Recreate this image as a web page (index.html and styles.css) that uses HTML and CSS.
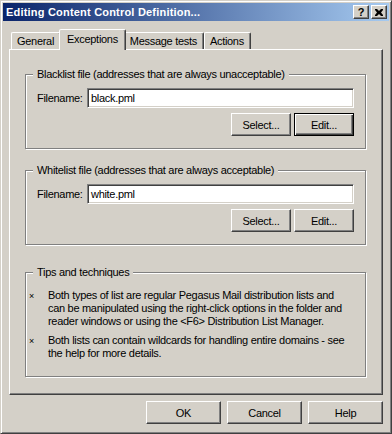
FILE: index.html
```html
<!DOCTYPE html>
<html lang="en">
<head>
    <meta charset="UTF-8">
    <title>Editing Content Control Definition...</title>
    <link rel="stylesheet" href="styles.css">
</head>
<body>
    <div class="window">
        <div class="titlebar">
            <span class="title">Editing Content Control Definition...</span>
            <div class="caption-buttons">
                <span class="cap-btn help">?</span>
                <span class="cap-btn">
                    <svg width="8" height="7" viewBox="0 0 8 7"><path d="M0 0h2l2 2 2-2h2v1l-2 2.5 2 2.5v1h-2l-2-2-2 2h-2v-1l2-2.5-2-2.5z" fill="#000"/></svg>
                </span>
            </div>
        </div>

        <div class="dialog-body">
            <div class="tabs">
                <div class="tab">General</div>
                <div class="tab active">Exceptions</div>
                <div class="tab">Message tests</div>
                <div class="tab">Actions</div>
            </div>

            <div class="panel">
                <fieldset class="group">
                    <legend>Blacklist file (addresses that are always unacceptable)</legend>
                    <div class="field-row">
                        <label>Filename:</label>
                        <div class="textbox">black.pml</div>
                    </div>
                    <div class="button-row">
                        <button class="btn">Select...</button>
                        <button class="btn default">Edit...</button>
                    </div>
                </fieldset>

                <fieldset class="group">
                    <legend>Whitelist file (addresses that are always acceptable)</legend>
                    <div class="field-row">
                        <label>Filename:</label>
                        <div class="textbox">white.pml</div>
                    </div>
                    <div class="button-row">
                        <button class="btn">Select...</button>
                        <button class="btn">Edit...</button>
                    </div>
                </fieldset>

                <fieldset class="group tips">
                    <legend>Tips and techniques</legend>
                    <ul class="tip-list">
                        <li>Both types of list are regular Pegasus Mail distribution lists and<br>can be manipulated using the right-click options in the folder and<br>reader windows or using the &lt;F6&gt; Distribution List Manager.</li>
                        <li>Both lists can contain wildcards for handling entire domains - see<br>the help for more details.</li>
                    </ul>
                </fieldset>
            </div>

            <div class="dialog-buttons">
                <button class="btn wide">OK</button>
                <button class="btn wide">Cancel</button>
                <button class="btn wide">Help</button>
            </div>
        </div>
    </div>
</body>
</html>
```

FILE: styles.css
```css
* {
    margin: 0;
    padding: 0;
    box-sizing: border-box;
}

body {
    font-family: 'Liberation Sans', Arial, sans-serif;
    font-size: 11px;
    letter-spacing: -0.3px;
    color: #000;
    background: #d4d0c8;
}

.window {
    width: 392px;
    height: 434px;
    padding: 2px;
    background: #d4d0c8;
    border: 1px solid;
    border-color: #d4d0c8 #404040 #404040 #d4d0c8;
    box-shadow: inset 1px 1px #fff, inset -1px -1px #808080;
}

/* caption */
.titlebar {
    height: 18px;
    display: flex;
    align-items: center;
    justify-content: space-between;
    padding-left: 3px;
    background: linear-gradient(to right, #0a246a, #a6caf0);
}

.title {
    color: #fff;
    font-weight: bold;
    letter-spacing: 0.2px;
}

.caption-buttons {
    display: flex;
    gap: 2px;
    margin-right: 2px;
}

.cap-btn {
    width: 16px;
    height: 14px;
    display: flex;
    justify-content: center;
    align-items: center;
    background: #d4d0c8;
    border: 1px solid;
    border-color: #fff #404040 #404040 #fff;
    box-shadow: inset -1px -1px #808080;
}

.cap-btn.help {
    font-weight: bold;
    font-size: 11px;
    letter-spacing: 0;
}

/* body */
.dialog-body {
    padding: 0 6px;
}

.tabs {
    display: flex;
    align-items: flex-end;
    margin-top: 8px;
    padding-left: 2px;
}

.tab {
    height: 17px;
    display: flex;
    align-items: center;
    padding: 0 6px 1px 5px;
    border: 1px solid;
    border-bottom: none;
    border-color: #fff #404040 transparent #fff;
    border-radius: 2px 2px 0 0;
    box-shadow: inset -1px 0 #808080;
}

.tab.active {
    height: 21px;
    padding: 0 7px 3px;
    margin: 0 -2px -1px;
    position: relative;
    z-index: 1;
    background: #d4d0c8;
}

.panel {
    height: 346px;
    padding: 18px 16px 0 15px;
    border: 1px solid;
    border-color: #fff #404040 #404040 #fff;
    box-shadow: inset -1px -1px #808080;
}

.group {
    min-width: 0;
    padding: 7px 11px 12px;
    border: 1px solid #808080;
    box-shadow: 1px 1px #fff, inset 1px 1px #fff;
    margin-bottom: 15px;
}

.group legend {
    line-height: 13px;
    padding: 0 4px;
    margin-left: -4px;
    background: #d4d0c8;
}

.field-row {
    display: flex;
    align-items: center;
}

.field-row label {
    width: 50px;
}

.textbox {
    flex: 1;
    height: 20px;
    padding: 0 3px;
    display: flex;
    align-items: center;
    background: #fff;
    border: 1px solid;
    border-color: #808080 #fff #fff #808080;
    box-shadow: inset 1px 1px #404040, inset -1px -1px #d4d0c8;
}

.button-row {
    display: flex;
    justify-content: flex-end;
    gap: 3px;
    margin-top: 5px;
}

.btn {
    width: 60px;
    height: 23px;
    font: inherit;
    letter-spacing: inherit;
    color: #000;
    background: #d4d0c8;
    border: 1px solid;
    border-color: #fff #404040 #404040 #fff;
    box-shadow: inset -1px -1px #808080;
}

.btn.default {
    border-color: #000;
    box-shadow: inset 1px 1px #fff, inset -1px -1px #404040, inset -2px -2px #808080;
}

.btn.wide {
    width: 75px;
}

/* tips */
.group.tips {
    margin: 21px 0 0;
    padding: 10px 11px 16px;
}

.tip-list {
    list-style: none;
    line-height: 13px;
    margin-left: -11px;
}

.tip-list li {
    position: relative;
    padding-left: 22px;
}

.tip-list li + li {
    margin-top: 6px;
}

.tip-list li::before {
    content: '\00d7';
    position: absolute;
    left: 3px;
    top: 1px;
    font-size: 9px;
}

.dialog-buttons {
    display: flex;
    justify-content: flex-end;
    gap: 6px;
    margin-top: 6px;
}
```
